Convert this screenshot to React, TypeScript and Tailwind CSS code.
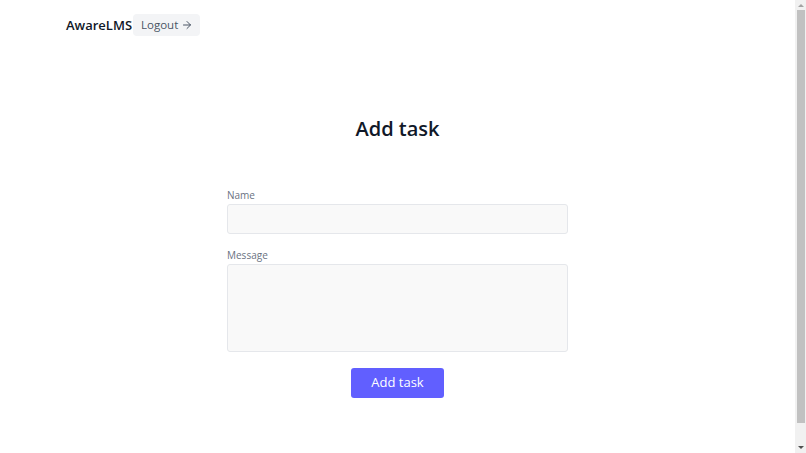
import { ArrowRight } from 'lucide-react'

function FakeScrollbar() {
  return (
    <div className="w-[11px] h-[453px] bg-[#f1f1f1] flex flex-col items-center">
      <div className="h-[10px] flex items-center justify-center">
        <div className="w-0 h-0 border-l-[3px] border-r-[3px] border-b-[3px] border-l-transparent border-r-transparent border-b-[#a3a3a3]" />
      </div>
      <div className="w-[8px] h-[413px] bg-[#c1c1c1]" />
      <div className="flex-1 flex items-end justify-center pb-[4px]">
        <div className="w-0 h-0 border-l-[3px] border-r-[3px] border-t-[3px] border-l-transparent border-r-transparent border-t-[#505050]" />
      </div>
    </div>
  )
}

export default function App() {
  return (
    <div className="flex h-[453px] overflow-hidden bg-white text-gray-800" style={{ fontFamily: '"Open Sans", "Noto Sans", sans-serif' }}>
      <div className="w-[795px] shrink-0">
        {/* Header */}
        <header className="flex items-center h-[50px] pl-[66px]">
          <span className="text-[13px] font-semibold text-gray-900 leading-none">AwareLMS</span>
          <button className="ml-px flex items-center gap-[3px] bg-gray-100 text-gray-600 text-[11.5px] pl-[8px] pr-[7px] h-[22px] rounded-sm">
            Logout
            <ArrowRight className="w-3 h-3" strokeWidth={2} />
          </button>
        </header>

        {/* Content */}
        <main className="flex flex-col items-center">
          <h1 className="mt-[65px] text-[20px] font-semibold text-gray-900 leading-7">Add task</h1>

          <form className="mt-[45px] w-[341px] flex flex-col">
            <label className="text-[10px] leading-[14px] text-gray-500 mb-[2px]">Name</label>
            <input className="h-[30px] bg-[#f9f9f9] border border-gray-200 rounded-[3px] px-2 text-sm outline-none" />

            <label className="mt-[14px] text-[10px] leading-[14px] text-gray-500 mb-[2px]">Message</label>
            <textarea className="h-[88px] bg-[#f9f9f9] border border-gray-200 rounded-[3px] px-2 py-1 text-sm outline-none resize-none" />

            <button type="button" className="mt-[16px] self-center w-[93px] h-[30px] bg-indigo-500 text-white text-[13px] rounded-[3px]">
              Add task
            </button>
          </form>
        </main>
      </div>
      <FakeScrollbar />
    </div>
  )
}
